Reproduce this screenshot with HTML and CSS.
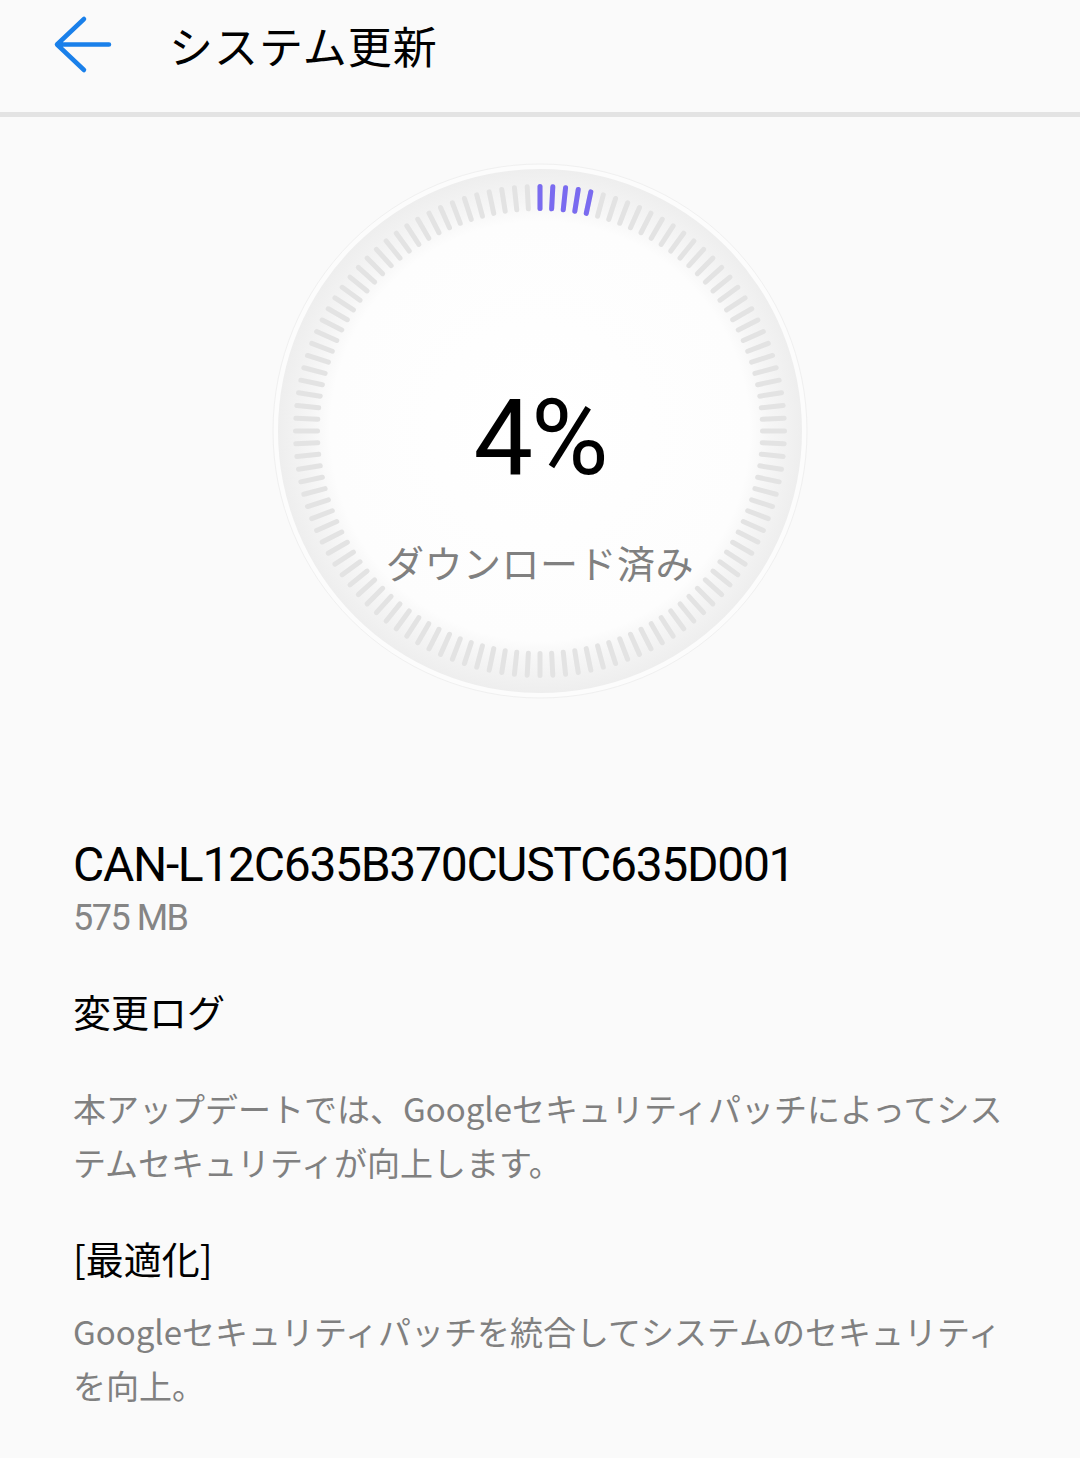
FILE: index.html
```html
<!DOCTYPE html>
<html lang="ja">
<head>
<meta charset="utf-8">
<title>システム更新</title>
<link rel="stylesheet" href="styles.css">
</head>
<body>
<header class="topbar">
  <svg class="back" width="64" height="60" viewBox="0 0 64 60" aria-hidden="true">
    <path d="M34 4 L7 29.5 L34 55 M7 29.5 H59" fill="none" stroke="#1a80ea" stroke-width="4.5" stroke-linecap="round" stroke-linejoin="round"/>
  </svg>
  <h1 class="title">システム更新</h1>
</header>

<section class="progress">
  <div class="dial">
    <svg class="dial-art" width="536" height="536" viewBox="0 0 536 536" aria-hidden="true">
      <defs>
        <radialGradient id="band" cx="50%" cy="50%" r="50%">
          <stop offset="0" stop-color="#ffffff"/>
          <stop offset="0.80" stop-color="#fdfdfd"/>
          <stop offset="0.87" stop-color="#f6f6f6"/>
          <stop offset="1" stop-color="#eeeeee"/>
        </radialGradient>
        <line id="t" x1="268" y1="23.5" x2="268" y2="45.5" stroke-width="5" stroke-linecap="round"/>
        <g id="t5">
          <use href="#t"/>
          <use href="#t" transform="rotate(3 268 268)"/>
          <use href="#t" transform="rotate(6 268 268)"/>
          <use href="#t" transform="rotate(9 268 268)"/>
          <use href="#t" transform="rotate(12 268 268)"/>
        </g>
        <g id="t15">
          <use href="#t5"/>
          <use href="#t5" transform="rotate(15 268 268)"/>
          <use href="#t5" transform="rotate(30 268 268)"/>
        </g>
      </defs>
      <circle cx="268" cy="268" r="267" fill="#fcfcfc" stroke="#f0f0f0" stroke-width="1"/>
      <circle cx="268" cy="268" r="262" fill="url(#band)"/>
      <g stroke="#e3e3e3">
        <use href="#t15"/>
        <use href="#t15" transform="rotate(45 268 268)"/>
        <use href="#t15" transform="rotate(90 268 268)"/>
        <use href="#t15" transform="rotate(135 268 268)"/>
        <use href="#t15" transform="rotate(180 268 268)"/>
        <use href="#t15" transform="rotate(225 268 268)"/>
        <use href="#t15" transform="rotate(270 268 268)"/>
        <use href="#t15" transform="rotate(315 268 268)"/>
      </g>
      <g stroke="#7a6bf0">
        <use href="#t5"/>
      </g>
    </svg>
    <div class="percent">4%</div>
    <div class="status">ダウンロード済み</div>
  </div>
</section>

<main class="details">
  <div class="version">CAN-L12C635B370CUSTC635D001</div>
  <div class="size">575 MB</div>

  <h2 class="heading">変更ログ</h2>
  <p class="para">本アップデートでは、Googleセキュリティパッチによってシステムセキュリティが向上します。</p>

  <h2 class="heading heading-opt">[最適化]</h2>
  <p class="para para-opt">Googleセキュリティパッチを統合してシステムのセキュリティを向上。</p>
</main>
</body>
</html>
```

FILE: styles.css
```css
* {
  box-sizing: border-box;
}

html, body {
  margin: 0;
  padding: 0;
}

body {
  width: 1080px;
  height: 1458px;
  overflow: hidden;
  background: #fafafa;
  font-family: "Noto Sans CJK JP", Roboto, sans-serif;
  color: #000;
}

.topbar {
  height: 117px;
  display: flex;
  align-items: center;
  padding: 0 0 23px 50px;
  border-bottom: 5px solid #e3e3e3;
  background: #fafafa;
}

.back {
  display: block;
  flex: none;
}

.title {
  margin: 0 0 0 55px;
  font-size: 44px;
  font-weight: 400;
  line-height: 56px;
  letter-spacing: 1px;
  color: #000;
}

.progress {
  display: flex;
  justify-content: center;
  padding-top: 46px;
}

.dial {
  position: relative;
  width: 536px;
  height: 536px;
  display: flex;
  flex-direction: column;
  align-items: center;
  padding-top: 221px;
}

.dial-art {
  position: absolute;
  left: 0;
  top: 0;
}

.percent {
  position: relative;
  font-family: Roboto, sans-serif;
  font-size: 106px;
  line-height: 108px;
  height: 108px;
  letter-spacing: -2px;
  color: #000;
}

.status {
  position: relative;
  margin-top: 51px;
  font-size: 38px;
  line-height: 38px;
  color: #808080;
  letter-spacing: 0.5px;
}

.details {
  padding: 138px 0 0 73px;
}

.version {
  font-family: Roboto, sans-serif;
  font-size: 48px;
  line-height: 56px;
  letter-spacing: -1.3px;
  color: #000;
}

.size {
  margin-top: 3px;
  font-family: Roboto, sans-serif;
  font-size: 36px;
  line-height: 44px;
  letter-spacing: -1.5px;
  color: #858585;
}

.heading {
  margin: 48px 0 0 0;
  font-size: 38px;
  font-weight: 400;
  line-height: 46px;
  color: #000;
}

.heading-opt {
  margin-top: 46px;
}

.para {
  margin: 47px 0 0 0;
  width: 940px;
  font-size: 33px;
  line-height: 54px;
  color: #808080;
}

.para-opt {
  margin-top: 23px;
}
```
